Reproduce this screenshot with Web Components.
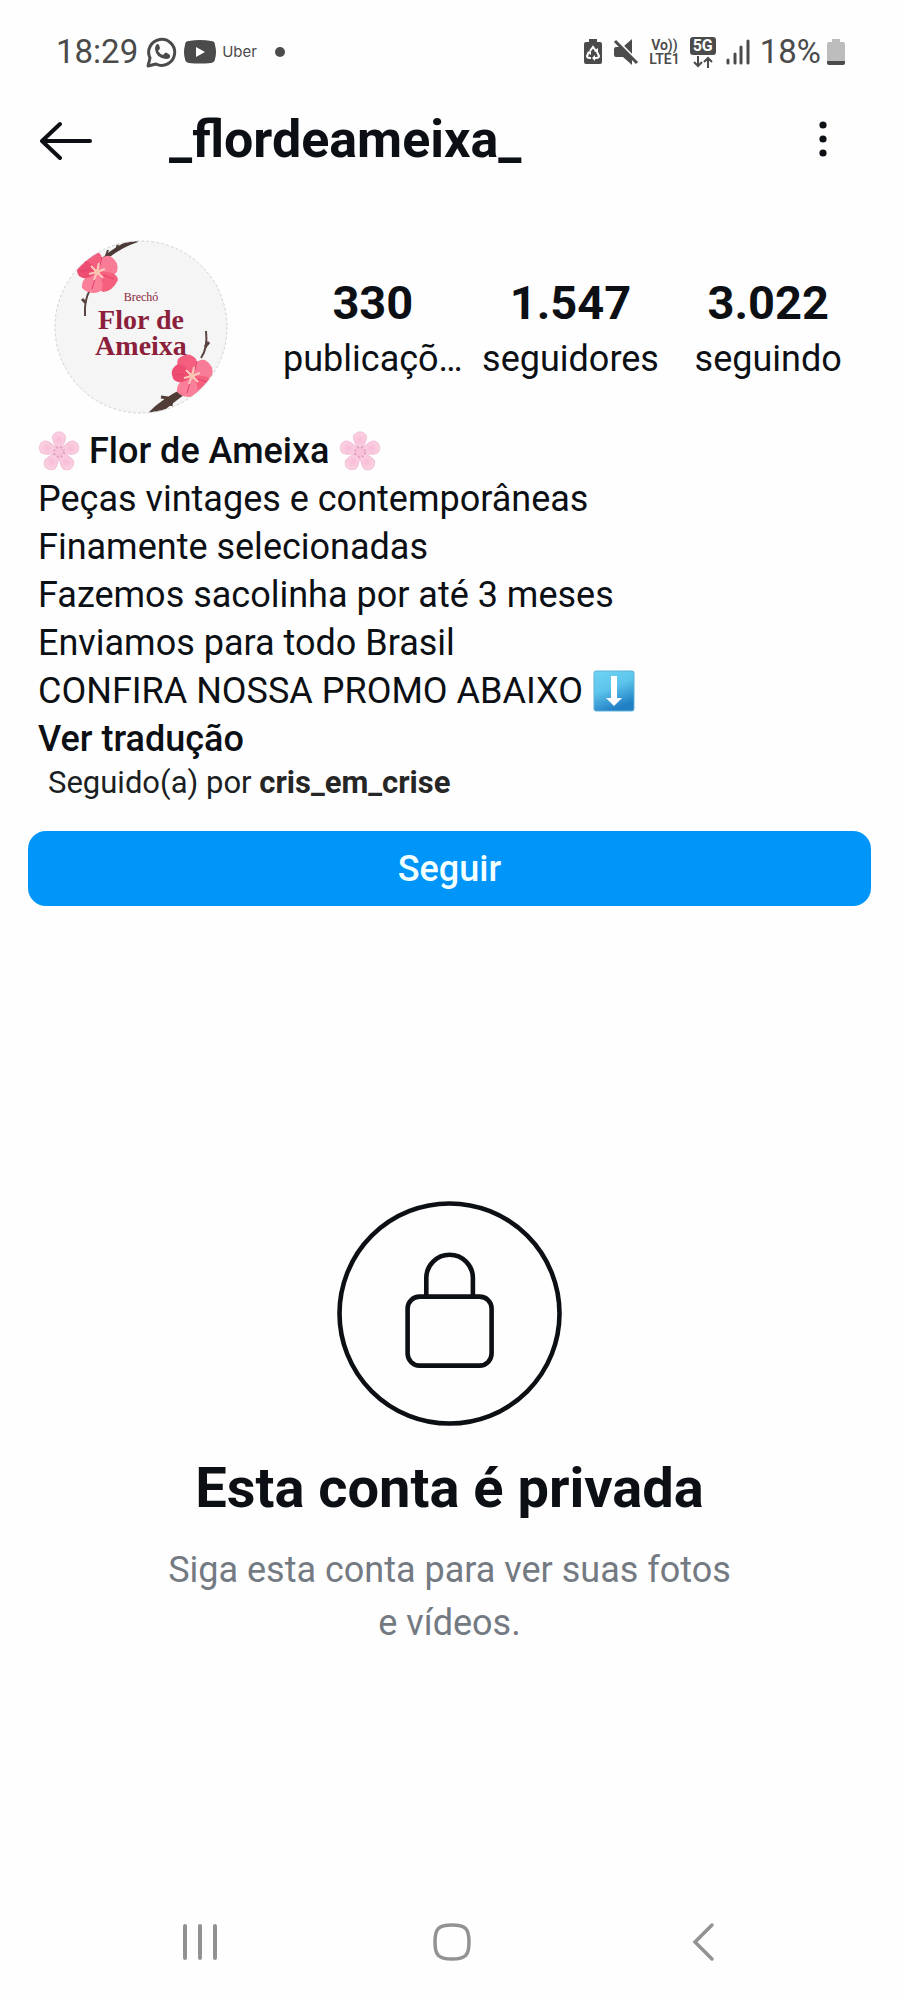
<!DOCTYPE html>
<html lang="pt-BR">
<head>
<meta charset="utf-8">
<meta name="viewport" content="width=device-width, initial-scale=1">
<title>_flordeameixa_</title>
<style>
  body { margin: 0; background: #fefefe; color: #0c1014; font-family: Roboto, "Liberation Sans", sans-serif; }
</style>
</head>
<body>
<profile-page></profile-page>
<script>
const define = (name, markup) => customElements.define(name, class extends HTMLElement {
  constructor() {
    super();
    this.attachShadow({ mode: 'open' }).innerHTML = markup;
  }
});

define('status-bar', `
<style>
  :host { display: flex; align-items: center; justify-content: space-between; height: 104px; padding: 0 54px 0 56px; box-sizing: border-box; color: #4b4b4b; font-size: 33px; line-height: 40px; }
  div { display: flex; align-items: center; }
  svg { display: block; flex: none; }
  .left { gap: 6px; }
  .time { padding-right: 2px; }
  .app { font: 15px/20px Inter, sans-serif; }
  .dot { width: 10px; height: 10px; margin-left: 12px; border-radius: 50%; background: #4b4b4b; }
  .right { gap: 10px; }
  .power { gap: 6px; }
  .tech { flex-direction: column; font-size: 14px; font-weight: 600; line-height: 14px; }
  .five { flex-direction: column; gap: 1px; }
  .five b { padding: 0 3px; border-radius: 3px; background: #4b4b4b; color: #fefefe; font-size: 16px; line-height: 18px; }
</style>
<div class="left">
  <span class="time">18:29</span>
  <svg width="32" height="32" viewBox="0 0 32 32" aria-label="WhatsApp"><path d="M2 30l2-8A13 13 0 1 1 10 28z" fill="none" stroke="#4b4b4b" stroke-width="3" stroke-linejoin="round"/><path d="M10 9q2-2 3 0l1 3q0 1-2 3 2 3 5 4l2-2q1-1 2 0l3 2q1 4-4 4Q10 22 9 13q0-2 1-4z" fill="#4b4b4b"/></svg>
  <svg width="32" height="24" viewBox="0 0 32 24" aria-label="YouTube"><path d="M5 1Q16-1 27 1q4 0 4 4 2 7 0 14 0 3-4 4-11 1-22 0-4-1-4-4-2-7 0-14 0-4 4-4z" fill="#4b4b4b"/><path d="M12 7l9 5-9 5z" fill="#fefefe"/></svg>
  <span class="app">Uber</span>
  <span class="dot"></span>
</div>
<div class="right">
  <svg width="20" height="28" viewBox="0 0 20 28" aria-hidden="true"><path d="M6 1h8v3h3q2 0 2 2v18q0 2-2 2H3q-2 0-2-2V6q0-2 2-2h3z" fill="#4b4b4b"/><path d="M7 13l3-4 3 4M14 14l2 4q0 2-3 2h-2M6 14l-2 4q0 2 3 2h1" fill="none" stroke="#fefefe" stroke-width="2"/><path d="M12 17v6l-3-3zM4 14l4-1 0 4zM15 10v5l-4-2z" fill="#fefefe"/></svg>
  <svg width="26" height="28" viewBox="0 0 26 28" aria-hidden="true"><path d="M1 11q0-2 2-2h4l12 12v6L10 19H3q-2 0-2-2zM11 8l8-7v15z" fill="#4b4b4b"/><path d="M4 2l21 22" stroke="#fefefe" stroke-width="2"/><path d="M2 3l22 22" stroke="#4b4b4b" stroke-width="3"/></svg>
  <div class="tech"><span>Vo))</span><span>LTE1</span></div>
  <div class="five"><b>5G</b><svg width="22" height="12" viewBox="0 0 22 12"><path d="M6 0v10M2 6l4 4 4-4M16 12V2M12 6l4-4 4 4" fill="none" stroke="#4b4b4b" stroke-width="2"/></svg></div>
  <svg width="24" height="26" viewBox="0 0 24 26" aria-hidden="true"><path d="M2 21v3M9 15v9M15 8v16M22 2v22" stroke="#4b4b4b" stroke-width="3" stroke-linecap="round"/></svg>
  <div class="power"><span>18%</span>
  <svg width="18" height="28" viewBox="0 0 18 28" aria-hidden="true"><path d="M5 1h8v3h3q2 0 2 2v17H0V6q0-2 2-2h3z" fill="#bdbdbd"/><path d="M0 23h18v2q0 2-2 2H2q-2 0-2-2z" fill="#4b4b4b"/></svg></div>
</div>`);

define('profile-header', `
<style>
  :host { display: flex; align-items: center; height: 72px; padding: 0 60px 0 40px; }
  button { display: flex; padding: 0; border: 0; background: none; }
  h1 { flex: 1; margin: 0 0 0 77px; font-size: 52px; font-weight: 700; line-height: 64px; }
</style>
<button aria-label="Voltar"><svg width="52" height="40" viewBox="0 0 52 40"><path d="M50 21H2M20 4L2 21l18 17" fill="none" stroke="#0c1014" stroke-width="4" stroke-linecap="round" stroke-linejoin="round"/></svg></button>
<h1><slot></slot></h1>
<button aria-label="Opções"><svg width="32" height="40" viewBox="0 0 32 40" fill="#0c1014"><circle cx="16" cy="5" r="3.600"/><circle cx="16" cy="19" r="3.600"/><circle cx="16" cy="33" r="3.600"/></svg></button>`);

define('brand-avatar', `
<style>:host { display: block; width: 174px; flex: none; } svg { display: block; width: 100%; }</style>
<svg viewBox="0 0 174 174" role="img" aria-label="Brechó Flor de Ameixa">
  <defs>
    <clipPath id="disc"><circle cx="87" cy="87" r="86"/></clipPath>
    <g id="bloom">
      <path d="M0 0Q-18-6-14-17-4-26 4-17 8-8 0 0z" fill="#f45f80"/>
      <path d="M0 0Q2-18 13-16 23-10 20 0 12 8 0 0z" fill="#f87c96"/>
      <path d="M0 0Q20-2 21 8 15 20 6 20-4 14 0 0z" fill="#f5607f"/>
      <path d="M0 0Q10 14 2 20-8 23-15 16-16 4 0 0z" fill="#fa7f98"/>
      <path d="M0 0Q-10 10-18 4-24-6-14-12-4-10 0 0z" fill="#ee4d72"/>
      <path d="M3-6L5-15M6 3L17 7M-2 7L-5 17M-8-2L-17-1" stroke="#e2416a" stroke-width="1"/>
      <path d="M0 0L-6-6M0 0L2-9M0 0L8-3M0 0L6 6M0 0L-3 8M0 0L-8 2" stroke="#ffc8bd" stroke-width="2"/>
      <circle r="3" fill="#f9c3ae"/>
    </g>
  </defs>
  <circle cx="87" cy="87" r="86" fill="#f5f5f5"/>
  <g clip-path="url(#disc)">
    <path d="M84-2Q66 2 48 18L44 28 52 20Q66 8 84 2z" fill="#4c3835"/>
    <path d="M62 12L64 3M52 16L54 10" stroke="#4c3835" stroke-width="2"/>
    <path d="M36 50Q30 60 31 76" fill="none" stroke="#5a4440" stroke-width="2"/><path d="M32 63l-4-4" stroke="#5a4440" stroke-width="3"/>
    <use href="#bloom" x="43" y="32"/>
    <path d="M94 173Q108 158 132 147L130 155Q120 162 106 174z" fill="#513c36"/>
    <path d="M118 158l-1 8M114 158l-7-1" stroke="#513c36" stroke-width="3"/>
    <path d="M147 118Q154 108 152 91" fill="none" stroke="#5a4440" stroke-width="2"/><path d="M151 107l4-5" stroke="#5a4440" stroke-width="3"/>
    <use href="#bloom" x="138" y="136"/>
  </g>
  <circle cx="87" cy="87" r="86" fill="none" stroke="#d2d2d2" stroke-width="1" stroke-dasharray="3 2"/>
  <g font-family="'Liberation Serif', serif" text-anchor="middle" fill="#8b1f3c">
    <text x="87" y="61" font-size="12">Brechó</text>
    <g font-size="28" font-weight="700"><text x="87" y="89">Flor de</text><text x="87" y="115">Ameixa</text></g>
  </g>
</svg>`);

define('profile-stat', `
<style>
  :host { display: block; flex: 1; text-align: center; }
  a { color: inherit; text-decoration: none; }
  b { display: block; padding-top: 4px; font-size: 47px; line-height: 56px; }
  span { display: block; padding-top: 4px; font-size: 36px; line-height: 48px; white-space: nowrap; }
</style>
<a href="#"><b><slot name="count"></slot></b><span><slot></slot></span></a>`);

define('profile-summary', `
<style>
  :host { display: flex; align-items: center; gap: 46px; padding: 0 32px 0 54px; }
  div { display: flex; flex: 1; }
</style>
<slot name="avatar"></slot><div><slot></slot></div>`);

define('blossom-icon', `
<style>:host { display: inline-block; } svg { display: block; }</style>
<svg width="42" height="40" viewBox="0 0 42 40" role="img" aria-label="flor de cerejeira">
  <defs><radialGradient id="pink" gradientUnits="userSpaceOnUse" cx="0" cy="-12" r="10"><stop offset="0" stop-color="#f9bcd6"/><stop offset="1" stop-color="#fbd9e8"/></radialGradient></defs>
  <g transform="translate(21 21)" fill="url(#pink)" stroke="#f3bdd3">
    <path id="petal" d="M-2-3Q-8-13-6-17-2-21 0-20 3-21 6-17 8-13 2-3z"/>
    <use href="#petal" transform="rotate(72)"/><use href="#petal" transform="rotate(144)"/><use href="#petal" transform="rotate(216)"/><use href="#petal" transform="rotate(288)"/>
    <circle r="5" fill="#f8c3d9" stroke="#e3a0c0" stroke-width="2" stroke-dasharray="2 2"/>
  </g>
</svg>`);

define('down-icon', `
<style>:host { display: inline-block; } svg { display: block; }</style>
<svg width="42" height="42" viewBox="0 0 42 42" role="img" aria-label="seta para baixo">
  <defs><linearGradient id="sky" x2=".4" y2="1"><stop stop-color="#6fd3f2"/><stop offset=".5" stop-color="#5dc4ec"/><stop offset="1" stop-color="#2180c4"/></linearGradient></defs>
  <rect x="1" y="1" width="40" height="40" rx="2" fill="url(#sky)" stroke="#5fb2d8"/>
  <path d="M18 6h6v22h5l-8 8-8-8h5z" fill="#fff"/>
</svg>`);

define('profile-bio', `
<style>
  :host { display: block; padding: 13px 38px 0; font-size: 36px; line-height: 48px; }
  p { margin: 0; }
  .name { display: flex; align-items: center; gap: 9px; font-weight: 500; }
  .promo { display: flex; align-items: center; gap: 10px; }
  button { display: block; padding: 0; border: 0; background: none; color: inherit; font: inherit; font-weight: 500; }
  .followed { padding-left: 10px; font-size: 31px; line-height: 40px; color: #1c1f22; }
  a { color: #262626; font-weight: 700; text-decoration: none; }
</style>
<p class="name"><blossom-icon></blossom-icon><span>Flor de Ameixa</span><blossom-icon></blossom-icon></p>
<p>Peças vintages e contemporâneas</p>
<p>Finamente selecionadas</p>
<p>Fazemos sacolinha por até 3 meses</p>
<p>Enviamos para todo Brasil</p>
<p class="promo"><span>CONFIRA NOSSA PROMO ABAIXO</span><down-icon></down-icon></p>
<button>Ver tradução</button>
<p class="followed">Seguido(a) por <a href="#">cris_em_crise</a></p>`);

define('follow-button', `
<style>
  :host { display: block; padding: 28px 28px 0; }
  button { display: block; width: 100%; height: 75px; padding: 0; border: 0; border-radius: 18px; background: #0095f8; color: #f4ffff; font: 500 36px/48px Roboto, "Liberation Sans", sans-serif; }
</style>
<button><slot></slot></button>`);

define('private-notice', `
<style>
  :host { display: flex; flex-direction: column; align-items: center; padding: 295px 32px 0; text-align: center; }
  svg { display: block; }
  h2 { margin: 26px 0 0; font-size: 56px; font-weight: 700; line-height: 72px; }
  p { max-width: 600px; margin: 20px 0 0; color: #737a82; font-size: 36px; line-height: 53px; }
</style>
<svg width="225" height="225" viewBox="0 0 225 225" fill="none" stroke="#0c1014" stroke-width="4.6" aria-hidden="true">
  <circle cx="112.500" cy="112.500" r="110"/><rect x="70.600" y="95.600" width="84" height="69" rx="12"/><path d="M89.300 96V77a23.300 23.300 0 0 1 46.600 0v19"/>
</svg>
<h2><slot name="title"></slot></h2>
<p><slot></slot></p>`);

define('system-nav', `
<style>
  :host { display: flex; height: 116px; padding: 0 70px 0 74px; }
  button { flex: 1; display: flex; align-items: center; justify-content: center; padding: 0; border: 0; background: none; }
</style>
<button aria-label="Recentes"><svg width="40" height="40" viewBox="0 0 40 40"><path d="M5 4v32M20 4v32M35 4v32" stroke="#929292" stroke-width="4" stroke-linecap="round"/></svg></button>
<button aria-label="Início"><svg width="40" height="40" viewBox="0 0 40 40"><path d="M20 3C34 3 37 7 37 20S34 37 20 37 3 33 3 20 6 3 20 3z" fill="none" stroke="#929292" stroke-width="3.500"/></svg></button>
<button aria-label="Voltar"><svg width="40" height="40" viewBox="0 0 40 40"><path d="M29 3L12 20l17 17" fill="none" stroke="#929292" stroke-width="3.500" stroke-linecap="round"/></svg></button>`);

define('profile-page', `
<style>
  :host { display: flex; flex-direction: column; min-height: 100vh; }
  profile-summary { margin-top: 64px; }
  system-nav { margin-top: auto; }
</style>
<status-bar></status-bar>
<profile-header>_flordeameixa_</profile-header>
<profile-summary>
  <brand-avatar slot="avatar"></brand-avatar>
  <profile-stat><span slot="count">330</span>publicaçõ…</profile-stat>
  <profile-stat><span slot="count">1.547</span>seguidores</profile-stat>
  <profile-stat><span slot="count">3.022</span>seguindo</profile-stat>
</profile-summary>
<profile-bio></profile-bio>
<follow-button>Seguir</follow-button>
<private-notice><span slot="title">Esta conta é privada</span>Siga esta conta para ver suas fotos<br>e vídeos.</private-notice>
<system-nav></system-nav>`);
</script>
</body>
</html>
